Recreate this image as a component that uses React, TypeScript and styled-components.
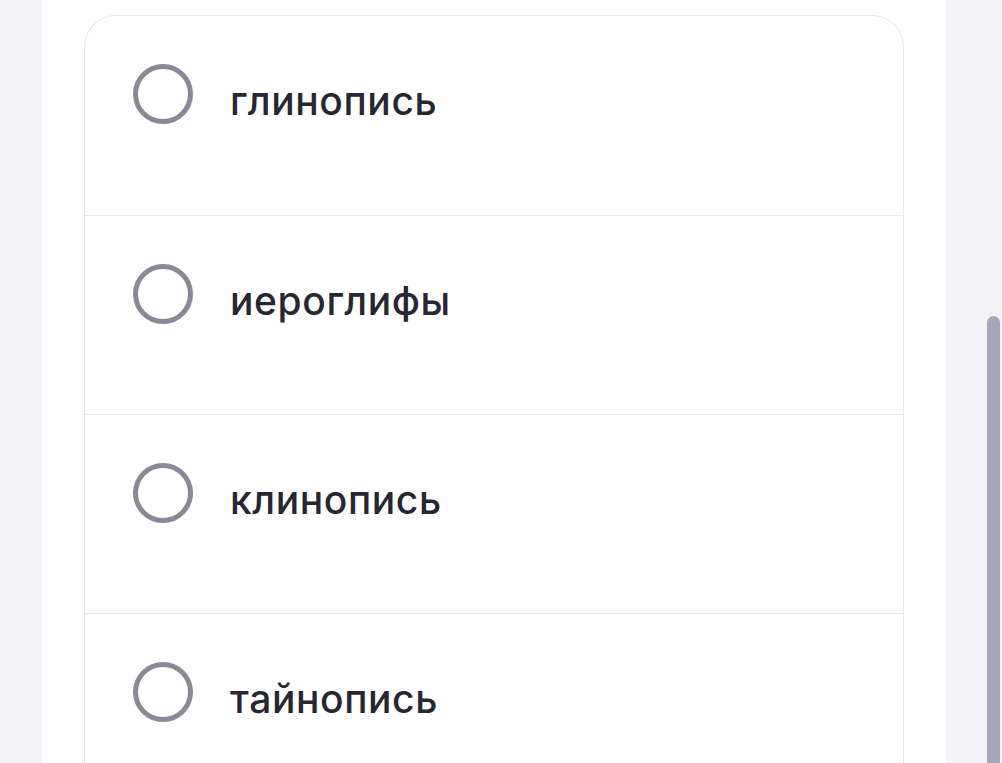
import React, { useState } from "react";
import styled, { createGlobalStyle } from "styled-components";

const GlobalStyle = createGlobalStyle`
  html, body {
    margin: 0;
    padding: 0;
    background: #f3f3f8;
    overflow: hidden;
  }
  body {
    font-family: Inter, "Noto Sans", "Liberation Sans", sans-serif;
  }
`;

const Page = styled.div`
  height: 763px;
  padding: 0 56px 0 42px;
  overflow: hidden;
`;

const Panel = styled.div`
  background: #ffffff;
  height: 100%;
  padding: 15px 42px 0 42px;
`;

const Card = styled.div`
  border: 1px solid #e7e7ec;
  border-bottom: none;
  border-radius: 32px 32px 0 0;
  background: #ffffff;
`;

const Option = styled.label`
  display: flex;
  align-items: flex-start;
  gap: 37px;
  height: 199px;
  padding: 48px 48px 0 48px;
  box-sizing: border-box;
  cursor: pointer;

  & + & {
    border-top: 1px solid #e7e7ec;
  }
`;

const Radio = styled.span<{ $checked: boolean }>`
  flex: none;
  width: 60px;
  height: 60px;
  box-sizing: border-box;
  border-radius: 50%;
  border: 5px solid ${({ $checked }) => ($checked ? "#5b5bd6" : "#898998")};
  box-shadow: ${({ $checked }) => ($checked ? "inset 0 0 0 9px #fff" : "none")};
  background: ${({ $checked }) => ($checked ? "#5b5bd6" : "#fff")};
`;

const Label = styled.span`
  margin-top: 10px;
  font-size: 39px;
  font-weight: 500;
  line-height: 53px;
  color: #272733;
  letter-spacing: 0.6px;
`;

const ScrollThumb = styled.div`
  position: fixed;
  left: 987px;
  top: 316px;
  width: 13px;
  height: 500px;
  border-radius: 7px;
  background: #a5a7b9;
`;

const options = ["глинопись", "иероглифы", "клинопись", "тайнопись"];

export default function App() {
  const [selected, setSelected] = useState<number | null>(null);

  return (
    <>
      <GlobalStyle />
      <Page>
        <Panel>
          <Card>
            {options.map((text, i) => (
              <Option key={text} onClick={() => setSelected(i)}>
                <Radio $checked={selected === i} />
                <Label>{text}</Label>
              </Option>
            ))}
          </Card>
        </Panel>
      </Page>
      <ScrollThumb />
    </>
  );
}
